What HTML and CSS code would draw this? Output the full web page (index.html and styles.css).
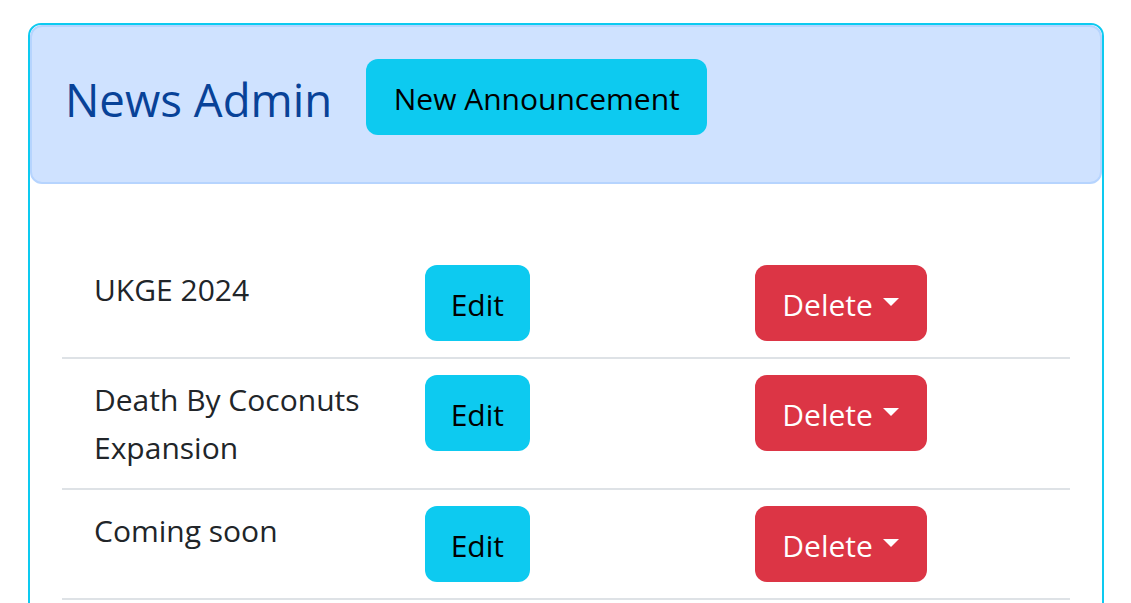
FILE: index.html
```html
<!DOCTYPE html>
<html lang="en">
<head>
<meta charset="utf-8">
<title>News Admin</title>
<link rel="stylesheet" href="styles.css">
</head>
<body>
<div class="card">
  <div class="header">
    <h1 class="title">News Admin</h1>
    <button class="btn btn-info btn-new">New Announcement</button>
  </div>
  <div class="body">
    <ul class="list">
      <li class="item">
        <div class="name">UKGE 2024</div>
        <div><button class="btn btn-info">Edit</button></div>
        <div><button class="btn btn-danger">Delete<span class="caret"></span></button></div>
      </li>
      <li class="item">
        <div class="name">Death By Coconuts Expansion</div>
        <div><button class="btn btn-info">Edit</button></div>
        <div><button class="btn btn-danger">Delete<span class="caret"></span></button></div>
      </li>
      <li class="item">
        <div class="name">Coming soon</div>
        <div><button class="btn btn-info">Edit</button></div>
        <div><button class="btn btn-danger">Delete<span class="caret"></span></button></div>
      </li>
    </ul>
  </div>
</div>
</body>
</html>
```

FILE: styles.css
```css
html, body {
  margin: 0;
  padding: 0;
  background: #fff;
}
body {
  font-family: "Open Sans", "Noto Sans", sans-serif;
  color: #212529;
  font-size: 30px;
  line-height: 48px;
  overflow: hidden;
}
.card {
  margin: 23px 0 0 28px;
  width: 1076px;
  box-sizing: border-box;
  border: 2px solid #0dcaf0;
  border-radius: 13px;
  min-height: 700px;
}
.header {
  display: flex;
  align-items: flex-start;
  background: #cfe2ff;
  border: 2px solid #b6d4fe;
  border-radius: 12px;
  padding: 32px 32px 47px 33px;
}
.title {
  margin: 0 34px 0 0;
  font-weight: 400;
  font-size: 45.6px;
  line-height: 76px;
  padding-top: 2px;
  height: 76px;
  box-sizing: border-box;
  color: #084298;
}
.btn {
  font-family: inherit;
  font-size: 30px;
  line-height: 48px;
  padding: 14px 24px 10px;
  border: 2px solid transparent;
  border-radius: 12px;
  cursor: pointer;
  display: inline-block;
  white-space: nowrap;
}
.btn-new {
  padding-left: 25.5px;
  padding-right: 25.5px;
}
.btn-info {
  background: #0dcaf0;
  color: #000;
}
.btn-danger {
  background: #dc3545;
  color: #fff;
  padding-left: 25px;
  padding-right: 26px;
}
.caret {
  display: inline-block;
  margin-left: 10px;
  width: 0;
  height: 0;
  border-top: 8.5px solid #fff;
  border-left: 8.5px solid transparent;
  border-right: 8.5px solid transparent;
  vertical-align: 10px;
}
.body {
  padding: 65px 32px 0;
}
.list {
  list-style: none;
  margin: 0;
  padding: 0;
}
.item {
  display: grid;
  grid-template-columns: 1fr 1fr 1fr;
  column-gap: 48px;
  padding: 16px 32px;
  border-bottom: 2px solid #dee2e6;
}
.name {
  padding-top: 1px;
}
```
